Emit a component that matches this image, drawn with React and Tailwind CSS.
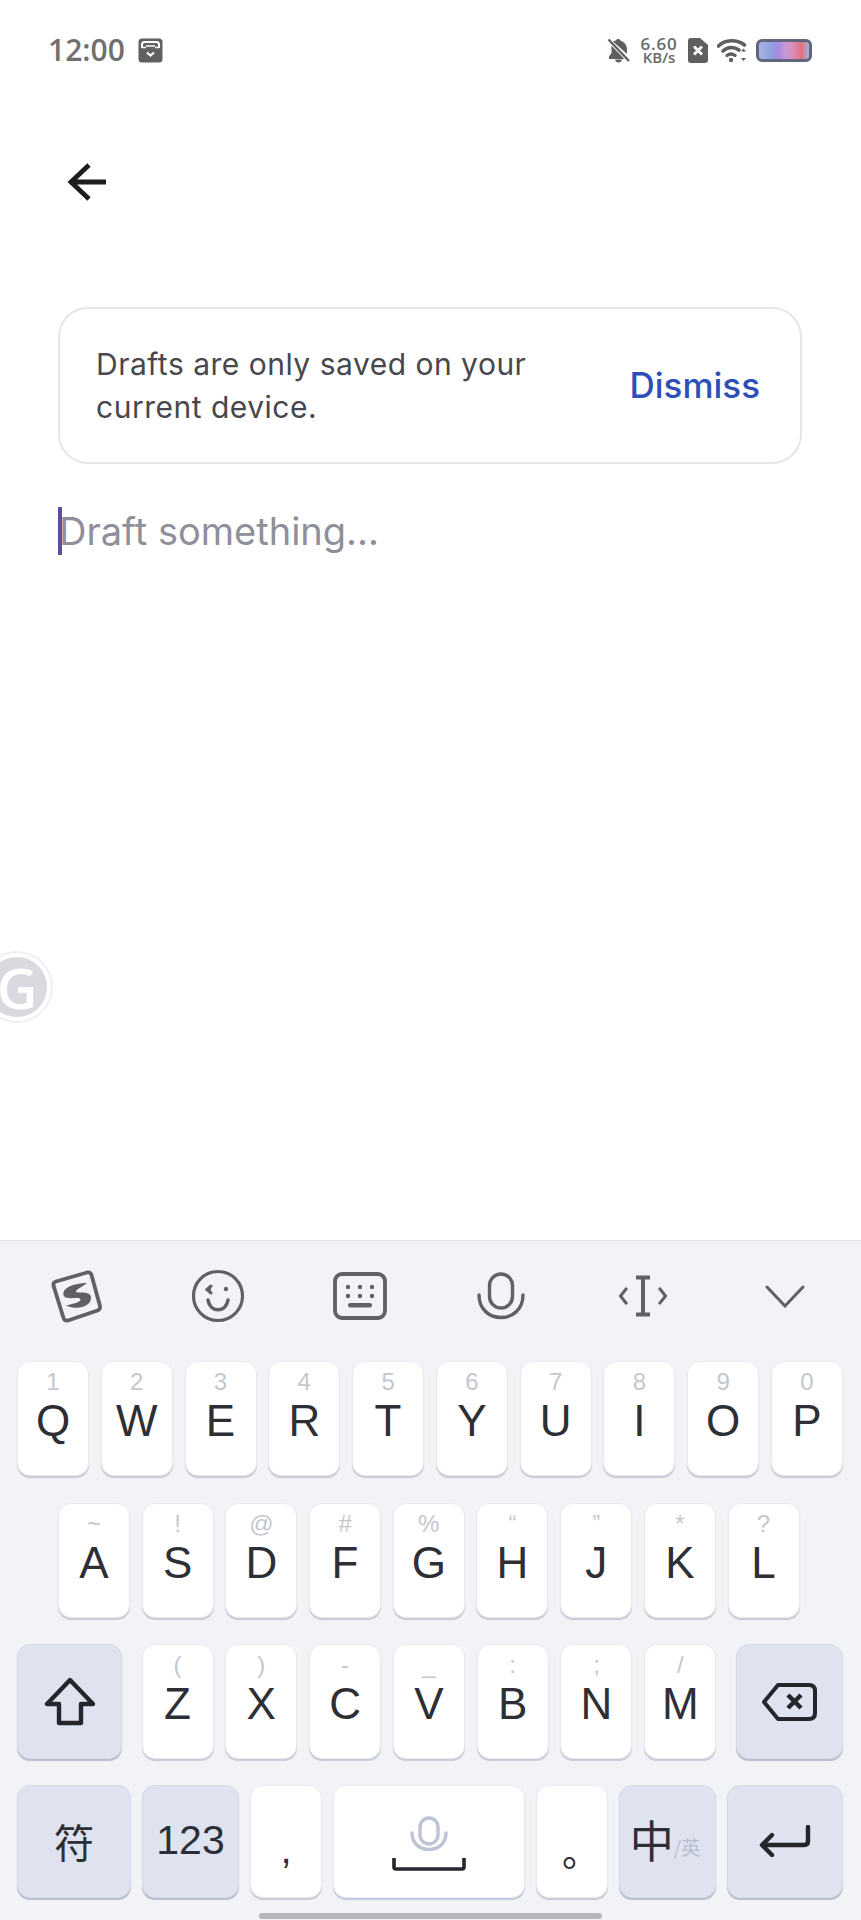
import React from 'react';

const Key = ({ hint, letter }) => (
  <div className="flex h-full w-[72px] flex-col items-center rounded-[13px] border border-[#e9eaef] bg-white pt-[8px] shadow-[0_2px_1px_#c8cbd6] font-['Liberation_Sans',sans-serif]">
    <span className="h-[24px] text-[24px] font-light leading-[24px] text-[#c4c7cf]">{hint}</span>
    <span className="mt-[5px] text-[44px] leading-[44px] text-[#2e2f35]">{letter}</span>
  </div>
);

const FnKey = ({ className, children }) => (
  <div className={`flex h-full items-center justify-center rounded-[13px] border border-[#d7dbe8] bg-[#dfe3ef] shadow-[0_2px_1px_#b9bdcb] ${className}`}>
    {children}
  </div>
);

const row1 = [['1', 'Q'], ['2', 'W'], ['3', 'E'], ['4', 'R'], ['5', 'T'], ['6', 'Y'], ['7', 'U'], ['8', 'I'], ['9', 'O'], ['0', 'P']];
const row2 = [['~', 'A'], ['!', 'S'], ['@', 'D'], ['#', 'F'], ['%', 'G'], ['“', 'H'], ['”', 'J'], ['*', 'K'], ['?', 'L']];
const row3 = [['(', 'Z'], [')', 'X'], ['-', 'C'], ['_', 'V'], [':', 'B'], [';', 'N'], ['/', 'M']];

const StatusBar = () => (
  <div className="flex h-[100px] items-center justify-between pl-[48px] pr-[49px]">
    <div className="flex items-center gap-[13px]">
      <span className="font-['Open_Sans',sans-serif] text-[30px] font-semibold leading-none text-[#707070]">12:00</span>
      <svg width="25" height="25" viewBox="0 0 25 25">
        <rect x="0.5" y="0.5" width="24" height="24" rx="3.5" fill="#616161" />
        <path d="M4 10V6.500Q4 4 6.500 4h12Q21 4 21 6.500V10" fill="none" stroke="#fff" strokeWidth="2" />
        <path d="M4 9.500h4M17 9.500h4M8 8h9" stroke="#fff" strokeWidth="1.600" fill="none" />
        <path d="M9 14.500l3.500 3 3.500-3" fill="none" stroke="#fff" strokeWidth="2.200" />
      </svg>
    </div>
    <div className="flex items-center">
      <svg width="24" height="25" viewBox="0 0 24 25" fill="#5f5f5f">
        <path d="M11 1c1.500 0 2.300.6 2.600 1.800C17.500 4 20 7.500 20 11v5L6 3.500C7.500 2.800 8.500 2.600 9 2.500 9.300 1.500 10 1 11 1zM4.500 7.500V15L2 18.500V21h15.500zM8 21.500h7c-.4 1.800-1.800 3-3.500 3S8.400 23.300 8 21.500z" />
        <path d="M2 2l20 21" stroke="#ffffff" strokeWidth="3.500" />
        <path d="M1.500 1.500L22 23" stroke="#5f5f5f" strokeWidth="2.400" />
      </svg>
      <div className="ml-[9px] flex w-[38px] flex-col items-center font-['Open_Sans',sans-serif] font-semibold text-[#696969]">
        <span className="text-[17px] leading-[15px] tracking-[0.8px]">6.60</span>
        <span className="text-[15px] leading-[13px]">KB/s</span>
      </div>
      <svg className="ml-[10px]" width="20" height="25" viewBox="0 0 20 25">
        <path d="M3 0h9l8 7v15q0 3-3 3H3q-3 0-3-3V3q0-3 3-3z" fill="#5f5f5f" />
        <path d="M6 8.500l8 8M14 8.500l-8 8" stroke="#fff" strokeWidth="2.800" />
      </svg>
      <svg className="ml-[9px]" width="30" height="25" viewBox="0 0 30 25" fill="none" stroke="#5f5f5f" strokeLinecap="round">
        <path d="M1.500 8C8 1.500 20 1 27.500 7" strokeWidth="3.600" />
        <path d="M6 13c5-4.500 11-4.500 16-1" strokeWidth="3.600" />
        <path d="M10 17.500c2.500-2 5.500-2 8 0" strokeWidth="3.400" />
        <circle cx="14" cy="22" r="2.200" fill="#5f5f5f" stroke="none" />
        <path d="M24 13.500l2.500-3 2.500 3zM24 20l2.500 3 2.500-3z" fill="#5f5f5f" stroke="none" />
      </svg>
      <div className="ml-[9px] h-[23px] w-[56px] rounded-[6px] border-[3px] border-[#62657e] bg-[linear-gradient(90deg,#a9b4e4_0%,#8fa0e0_25%,#a78ae0_38%,#c69ad8_52%,#d88fb8_68%,#e4707f_85%,#c78aa0_90%,#a9b0e0_100%)]" />
    </div>
  </div>
);

const ToolIcons = () => (
  <div className="grid h-[120px] grid-cols-6 pb-[10px] pl-[5px] pr-[5px]">
    <div className="flex items-center justify-center">
      <svg width="54" height="54" viewBox="0 0 54 54" fill="none">
        <path d="M7 12.500L38 3.500Q41.500 3 42.500 6L51 37Q51.500 40 48.500 41.500L19 51.500Q15.500 52 14.500 49L4.500 16.500Q4 13.500 7 12.500z" stroke="#606166" strokeWidth="3.800" />
        <path d="M38 14C27 14 13 18 14.500 26 16 32 31 27 31.500 30.500 32 33 24 35 17 36.500 29 42 43 37 42 28 41 21 27 25 27 22.500 27 20.500 33 18 38 14z" fill="#606166" />
      </svg>
    </div>
    <div className="flex items-center justify-center">
      <svg width="54" height="54" viewBox="0 0 54 54" fill="none" stroke="#606166" strokeWidth="3.200" strokeLinecap="round">
        <circle cx="27" cy="27" r="24.500" />
        <path d="M17 31c2 13 18 13 20 0" strokeWidth="3.600" />
        <circle cx="35" cy="20" r="2.200" fill="#606166" stroke="none" />
        <path d="M20 17l-4 3.500 4 3.500" strokeWidth="3" fill="#606166" />
      </svg>
    </div>
    <div className="flex items-center justify-center">
      <svg width="54" height="48" viewBox="0 0 54 48" fill="none">
        <rect x="2" y="2" width="50" height="44" rx="7" stroke="#606166" strokeWidth="3.800" />
        <g fill="#606166">
          <circle cx="15" cy="15" r="2.200" /><circle cx="27" cy="15" r="2.200" /><circle cx="39" cy="15" r="2.200" />
          <circle cx="15" cy="24" r="2.200" /><circle cx="27" cy="24" r="2.200" /><circle cx="39" cy="24" r="2.200" />
          <rect x="15" y="31" width="24" height="4.500" rx="2" />
        </g>
      </svg>
    </div>
    <div className="flex items-center justify-center">
      <svg width="48" height="48" viewBox="0 0 48 48" fill="none" stroke="#606166" strokeWidth="3.400" strokeLinecap="round">
        <rect x="12.500" y="2" width="23" height="34" rx="11.500" />
        <path d="M2 23c0 30 44 30 44 0" />
      </svg>
    </div>
    <div className="flex items-center justify-center">
      <svg width="50" height="42" viewBox="0 0 50 42" fill="none" stroke="#606166" strokeLinecap="square">
        <path d="M25 3v36M20 2.500h10M20 39.500h10" strokeWidth="4" />
        <path d="M8 14l-5.500 7L8 28M42 14l5.500 7-5.500 7" strokeWidth="3" />
      </svg>
    </div>
    <div className="flex items-center justify-center">
      <svg width="40" height="24" viewBox="0 0 40 24" fill="none" stroke="#606166" strokeWidth="3" strokeLinecap="round">
        <path d="M2 3l18 19L38 3" />
      </svg>
    </div>
  </div>
);

const Keyboard = () => (
  <div className="h-[680px] border-t border-[#e6e6e9] bg-[#f2f3f7] font-['Liberation_Sans',sans-serif]">
    <ToolIcons />
    <div className="flex h-[115px] justify-between pl-[17px] pr-[18px]">
      {row1.map(([hint, letter]) => <Key key={letter} hint={hint} letter={letter} />)}
    </div>
    <div className="mt-[27px] flex h-[115px] gap-[11.700px] pl-[58px]">
      {row2.map(([hint, letter]) => <Key key={letter} hint={hint} letter={letter} />)}
    </div>
    <div className="mt-[26px] flex h-[115px] gap-[19.500px] pl-[17px]">
      <FnKey className="w-[105px]">
        <svg width="52" height="50" viewBox="0 0 52 50" fill="none" stroke="#24262c" strokeWidth="4.400" strokeLinejoin="round">
          <path d="M26 3L3 27h12v19h22V27h12z" />
        </svg>
      </FnKey>
      <div className="flex h-full gap-[11.800px]">
        {row3.map(([hint, letter]) => <Key key={letter} hint={hint} letter={letter} />)}
      </div>
      <FnKey className="w-[107px]">
        <svg width="56" height="40" viewBox="0 0 56 40" fill="none" stroke="#24262c" strokeWidth="4" strokeLinejoin="round">
          <path d="M17 3h31q6 0 6 6v22q0 6-6 6H17L3 20z" />
          <path d="M27 13l13 13M40 13L27 26" strokeWidth="4.500" />
        </svg>
      </FnKey>
    </div>
    <div className="mt-[26px] flex h-[113px] justify-between pl-[17px] pr-[18px]">
      <FnKey className="w-[114px] pb-[2px]">
        <span className="font-['Noto_Sans_CJK_TC',sans-serif] text-[40px] leading-none text-[#2e2f35]">符</span>
      </FnKey>
      <FnKey className="w-[97px] pb-[2px]">
        <span className="text-[41px] leading-none text-[#2c2f38]">123</span>
      </FnKey>
      <div className="flex h-full w-[72px] justify-center rounded-[13px] border border-[#e9eaef] bg-white pt-[43px] shadow-[0_2px_1px_#c8cbd6]">
        <span className="text-[40px] leading-[40px] text-[#2e2f35]">,</span>
      </div>
      <div className="flex h-full w-[192px] flex-col items-center rounded-[13px] border border-[#e9eaef] bg-white pt-[30px] shadow-[0_2px_1px_#c3c9dc]">
        <svg width="38" height="38" viewBox="0 0 38 38" fill="none" stroke="#bec4d6" strokeWidth="3.400" strokeLinecap="round">
          <rect x="10" y="2" width="18" height="26" rx="9" />
          <path d="M2 17c0 22 34 22 34 0" />
        </svg>
        <svg className="mt-[3px]" width="74" height="14" viewBox="0 0 74 14" fill="none" stroke="#24262c" strokeWidth="3.600" strokeLinejoin="round">
          <path d="M2 1v9q0 2 2 2h66q2 0 2-2V1" />
        </svg>
      </div>
      <div className="flex h-full w-[72px] justify-center rounded-[13px] border border-[#e9eaef] bg-white pt-[45px] shadow-[0_2px_1px_#c8cbd6]">
        <span className="translate-x-[9px] font-['Noto_Sans_CJK_SC',sans-serif] text-[38px] leading-[38px] text-[#2e2f35]">。</span>
      </div>
      <FnKey className="w-[97px] pr-[5px]">
        <span className="mb-[6px] font-['Noto_Sans_CJK_SC',sans-serif] text-[44px] leading-none text-[#2e2f35]">中</span>
        <span className="mt-[10px] font-['Noto_Sans_CJK_SC',sans-serif] text-[19px] leading-none text-[#b8bed0]">/英</span>
      </FnKey>
      <FnKey className="w-[116px] pb-[2px]">
        <svg width="52" height="32" viewBox="0 0 52 32" fill="none" stroke="#24262c" strokeWidth="4.400" strokeLinecap="round" strokeLinejoin="round">
          <path d="M49 2v14q0 4-4 4H4M13 10L3 20l10 10" />
        </svg>
      </FnKey>
    </div>
    <div className="mt-[15px] flex justify-center">
      <div className="h-[6px] w-[343px] rounded-full bg-[#b6b6ba]" />
    </div>
  </div>
);

export default function App() {
  return (
    <div className="relative flex h-[1920px] w-[861px] flex-col overflow-hidden bg-white font-['Inter',sans-serif]">
      <StatusBar />
      <div className="flex-1 pl-[58px] pr-[59px]">
        <button className="ml-[9px] mt-[63px] block">
          <svg width="40" height="38" viewBox="0 0 40 38" fill="none" stroke="#1d1d1f" strokeWidth="4.800">
            <path d="M39 19H5M22 2L4 19l18 17" />
          </svg>
        </button>
        <div className="mt-[106px] flex h-[157px] items-center justify-between rounded-[30px] border-2 border-[#e6e6e8] pl-[36px] pr-[40px]">
          <p className="text-[30px] leading-[43px] tracking-[0.5px] text-[#47474d]">
            Drafts are only saved on your<br />current device.
          </p>
          <span className="text-[35px] font-medium text-[#2e4fb7]">Dismiss</span>
        </div>
        <div className="mt-[43px] flex h-[48px] items-center">
          <span className="h-[48px] w-[4px] bg-[#5f4b9f]" />
          <span className="ml-[-3px] text-[38px] leading-none text-[#8f8f9a]">Draft something...</span>
        </div>
      </div>
      <Keyboard />
      {/* floating grammar bubble */}
      <div className="absolute left-[-19px] top-[951px] flex h-[72px] w-[72px] items-center justify-center rounded-full border-2 border-[#f0f0f4] bg-white">
        <div className="flex h-[60px] w-[60px] items-center justify-center rounded-full bg-[#d9d9e0]">
          <span className="font-['Open_Sans',sans-serif] text-[56px] font-semibold leading-none text-white">G</span>
        </div>
      </div>
    </div>
  );
}
